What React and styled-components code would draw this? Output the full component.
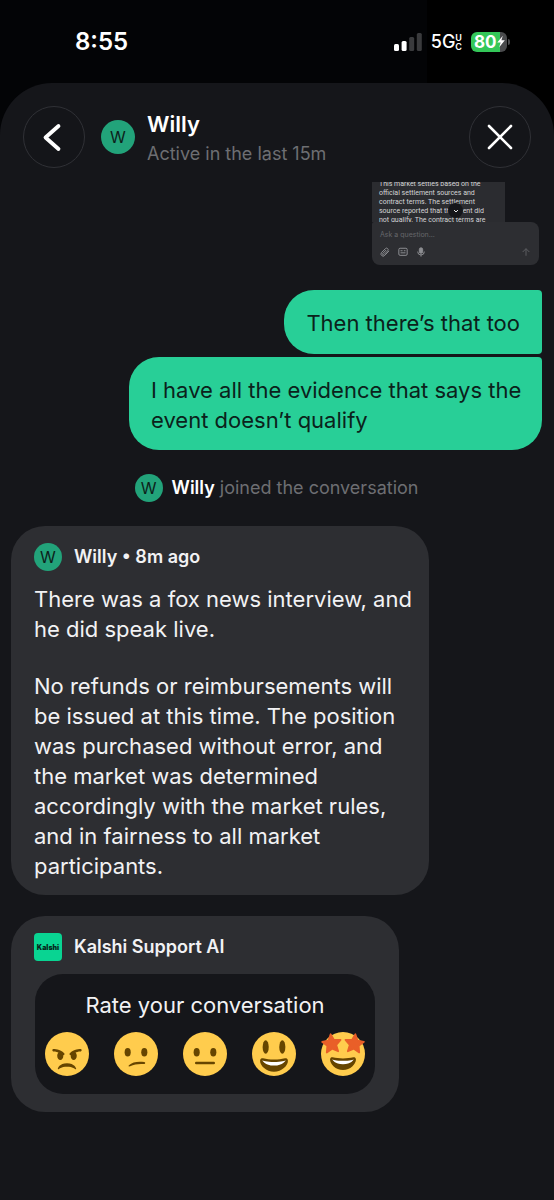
import styled, { createGlobalStyle } from "styled-components";

const App = () => {
    return(
        <>
        <GlobalStyle />
        <Screen>
            <StatusBar>
                <Time>8:55</Time>
                <StatusIcons>
                    <SignalIcon />
                    <Network>
                        5G
                        <NetworkSub>
                            <span>U</span>
                            <span>C</span>
                        </NetworkSub>
                    </Network>
                    <Battery>
                        <BatteryBody>
                            80
                            <BoltIcon />
                        </BatteryBody>
                        <BatteryTip />
                    </Battery>
                </StatusIcons>
            </StatusBar>
            <Sheet>
                <Header>
                    <RoundButton aria-label="Back">
                        <svg width="60" height="60" viewBox="0 0 60 60" fill="none" stroke="#fff" strokeWidth="3.8" strokeLinecap="round" strokeLinejoin="round">
                            <path d="M34.5 19L21.500 30.500L34.500 42" />
                        </svg>
                    </RoundButton>
                    <Avatar size={34}>W</Avatar>
                    <Agent>
                        <AgentName>Willy</AgentName>
                        <AgentStatus>Active in the last 15m</AgentStatus>
                    </Agent>
                    <RoundButton aria-label="Close">
                        <svg width="60" height="60" viewBox="0 0 60 60" fill="none" stroke="#fff" strokeWidth="2.6" strokeLinecap="round">
                            <path d="M19 19L41 41M41 19L19 41" />
                        </svg>
                    </RoundButton>
                </Header>
                <Chat>
                    <Attachment />
                    <Sent>
                        <SentBubble>Then there’s that too</SentBubble>
                        <SentBubble last>I have all the evidence that says the event doesn’t qualify</SentBubble>
                    </Sent>
                    <Joined>
                        <Avatar size={28}>W</Avatar>
                        <p><b>Willy</b> joined the conversation</p>
                    </Joined>
                    <Card>
                        <CardHeader>
                            <Avatar size={28}>W</Avatar>
                            <Sender>Willy • 8m ago</Sender>
                        </CardHeader>
                        <CardText>There was a fox news interview, and he did speak live.</CardText>
                        <CardText>No refunds or reimbursements will be issued at this time. The position was purchased without error, and the market was determined accordingly with the market rules, and in fairness to all market participants.</CardText>
                    </Card>
                    <Card narrow>
                        <CardHeader>
                            <Logo>Kalshi</Logo>
                            <Sender>Kalshi Support AI</Sender>
                        </CardHeader>
                        <RateBox>
                            <RateTitle>Rate your conversation</RateTitle>
                            <Faces>
                                {faces.map((face) => (
                                    <FaceButton key={face.label} aria-label={face.label}>
                                        <svg width="44" height="44" viewBox="0 0 36 36" overflow="visible">
                                            <circle cx="18" cy="18" r="18" fill="#ffcc4d" />
                                            {face.drawing}
                                        </svg>
                                    </FaceButton>
                                ))}
                            </Faces>
                        </RateBox>
                    </Card>
                </Chat>
            </Sheet>
        </Screen>
        </>
    )
}

const Attachment = () => {
    return(
        <Shot>
            <ShotMessage>
                <ShotText>
                    This market settles based on the<br />
                    official settlement sources and<br />
                    contract terms. The settlement<br />
                    source reported that the event did<br />
                    not qualify. The contract terms are
                </ShotText>
                <ShotScroll>
                    <svg width="8" height="8" viewBox="0 0 8 8" fill="none" stroke="#e8e8ea" strokeWidth="1">
                        <path d="M2 3L4 5L6 3" />
                    </svg>
                </ShotScroll>
            </ShotMessage>
            <ShotComposer>
                <p>Ask a question…</p>
                <ShotTools>
                    <svg width="10" height="10" viewBox="0 0 24 24" fill="none" stroke="#8d8e92" strokeWidth="2.4" strokeLinecap="round">
                        <path d="M21 10L11.5 20a5 5 0 0 1-8-6.5L13 4a3.6 3.6 0 0 1 5.5 5L9.5 18a1.8 1.8 0 0 1-3-2.4L14 8" />
                    </svg>
                    <svg width="10" height="10" viewBox="0 0 24 24" fill="none" stroke="#8d8e92" strokeWidth="2.4">
                        <rect x="2" y="3" width="20" height="17" rx="3" />
                        <path d="M6 9h5M6 14h12M14 9h4" />
                    </svg>
                    <svg width="10" height="10" viewBox="0 0 24 24" fill="none" stroke="#8d8e92" strokeWidth="2.4">
                        <rect x="8" y="2" width="8" height="13" rx="4" fill="#8d8e92" />
                        <path d="M4 11a8 8 0 0 0 16 0M12 19v4" />
                    </svg>
                    <svg width="10" height="10" viewBox="0 0 24 24" fill="none" stroke="#5c5d61" strokeWidth="2.4">
                        <path d="M12 21V4M4 12L12 4L20 12" />
                    </svg>
                </ShotTools>
            </ShotComposer>
        </Shot>
    )
}

const SignalIcon = () => (
    <svg width="28" height="18" viewBox="0 0 28 18">
        <rect x="0" y="11" width="5" height="7" rx="1.5" fill="#fff" />
        <rect x="7.6" y="8" width="5" height="10" rx="1.5" fill="#fff" />
        <rect x="15.2" y="4" width="5" height="14" rx="1.5" fill="#3a3b3d" />
        <rect x="22.8" y="0" width="5" height="18" rx="1.5" fill="#3a3b3d" />
    </svg>
)

const BoltIcon = () => (
    <svg width="8" height="13" viewBox="0 0 9 14">
        <path d="M6.5 0.5L0.3 8H4L2.5 13.5L8.8 5.6H5Z" fill="#fff" />
    </svg>
)

const Star = ({x, turn}) => (
    <path
        transform={`translate(${x} 9.8) rotate(${turn})`}
        d="M0-8L2.3-3.1L7.6-2.5L3.7 1.2L4.7 6.5L0 3.9L-4.7 6.5L-3.7 1.2L-7.6-2.5L-2.3-3.1Z"
        fill="#e95f28"
        stroke="#e95f28"
        strokeWidth="1.4"
        strokeLinejoin="round"
    />
)

const Eyes = () => (
    <>
    <ellipse cx="11.2" cy="16.5" rx="2.5" ry="3.5" fill="#664500" />
    <ellipse cx="24.8" cy="16.5" rx="2.5" ry="3.5" fill="#664500" />
    </>
)

const faces = [
    {
        label: "Terrible",
        drawing: (
            <path fill="#664500" d="M25.485 29.879C25.44 29.7 24.317 25.5 18 25.5c-6.318 0-7.44 4.2-7.485 4.379-.055.217.043.442.237.554.195.111.439.078.6-.077.019-.019 1.954-1.856 6.648-1.856s6.63 1.837 6.648 1.855c.096.095.224.145.352.145.084 0 .169-.021.246-.064.196-.112.294-.339.239-.557zm-9.778-12.586C12.452 14.038 7.221 14 7 14c-.552 0-.999.447-.999.998-.001.552.446 1 .998 1.002.029 0 1.925.022 3.983.737-.593.64-.982 1.634-.982 2.763 0 1.934 1.119 3.5 2.5 3.5s2.5-1.566 2.5-3.5c0-.174-.019-.34-.037-.507.013 0 .025.007.037.007.256 0 .512-.098.707-.293.391-.391.391-1.023 0-1.414zM29 14c-.221 0-5.451.038-8.707 3.293-.391.391-.391 1.023 0 1.414.195.195.451.293.707.293.013 0 .024-.007.036-.007-.016.167-.036.333-.036.507 0 1.934 1.119 3.5 2.5 3.5s2.5-1.566 2.5-3.5c0-1.129-.389-2.123-.982-2.763 2.058-.715 3.954-.737 3.984-.737.551-.002.998-.45.997-1.002-.001-.551-.447-.998-.999-.998z" />
        ),
    },
    {
        label: "Bad",
        drawing: (
            <>
            <Eyes />
            <path fill="#664500" d="M12.2 27.2C15 24.6 19.6 23.8 24.8 24.6C25.9 24.8 25.8 26.2 24.7 26.2C20 25.9 16.8 26.3 13.2 28.1C12.3 28.5 11.5 27.9 12.2 27.2Z" />
            </>
        ),
    },
    {
        label: "OK",
        drawing: (
            <>
            <Eyes />
            <path fill="#664500" d="M25.2 26.4H10.8a1 1 0 0 1 0-2h14.4a1 1 0 0 1 0 2z" />
            </>
        ),
    },
    {
        label: "Great",
        drawing: (
            <>
            <ellipse cx="11.2" cy="12.3" rx="2.5" ry="5.5" fill="#664500" />
            <ellipse cx="24.8" cy="12.3" rx="2.5" ry="5.5" fill="#664500" />
            <path fill="#664500" d="M18 22.5c-3.623 0-6.027-.422-9-1-.679-.131-2.4 0-2.4 2 0 4 4.995 9 11.4 9 6.404 0 11.4-5 11.4-9 0-2-1.721-2.132-2.4-2-2.973.578-5.377 1-9 1z" />
            <path fill="#fff" d="M8.5 23.300s3.500 1.200 9.500 1.200 9.500-1.200 9.500-1.200-2 4.200-9.500 4.200-9.500-4.200-9.500-4.200z" />
            </>
        ),
    },
    {
        label: "Amazing",
        drawing: (
            <>
            <Star x={8.7} turn={-6} />
            <Star x={27.3} turn={6} />
            <path fill="#664500" d="M18 21.6c-3.4 0-5.7-.4-8.5-.95-.64-.12-2.1 0-2.1 1.9 0 3.8 4.5 8.6 10.6 8.6s10.6-4.8 10.6-8.6c0-1.9-1.46-2.02-2.1-1.9-2.8.55-5.1.95-8.5.95z" />
            <path fill="#fff" d="M9.3 22.4s3 1.1 8.7 1.1 8.7-1.1 8.7-1.1-2 3.9-8.7 3.9-8.7-3.9-8.7-3.9z" />
            </>
        ),
    },
]

const GlobalStyle = createGlobalStyle`
* {
    box-sizing: border-box;
}
body {
    margin: 0;
    background-color: #030406;
    font-family: Inter, "Liberation Sans", sans-serif;
}
p, h1, h2 {
    margin: 0;
}
button {
    padding: 0;
    border: none;
    background: none;
    cursor: pointer;
}
svg {
    display: block;
    flex-shrink: 0;
}
`

const Screen = styled.div`
min-height: 100vh;
display: flex;
flex-direction: column;
background: linear-gradient(to right, #030406 77%, #000 77%);
color: #fff;
`
const StatusBar = styled.div`
height: 83px;
padding: 0 44px 0 75px;
display: flex;
justify-content: space-between;
align-items: center;
`
const Time = styled.div`
font-size: 24px;
font-weight: 600;
`
const StatusIcons = styled.div`
display: flex;
align-items: center;
gap: 9px;
`
const Network = styled.div`
display: flex;
align-items: center;
font-size: 18px;
font-weight: 500;
`
const NetworkSub = styled.div`
display: flex;
flex-direction: column;
font-size: 9px;
line-height: 9px;
font-weight: 600;
span {
    height: 9px;
    overflow: hidden;
}
`
const Battery = styled.div`
display: flex;
align-items: center;
gap: 1px;
`
const BatteryBody = styled.div`
width: 36px;
height: 20px;
padding-left: 3px;
display: flex;
align-items: center;
border-radius: 6px;
background: linear-gradient(to right, #34c759 80%, #4a4b4d 80%);
font-size: 17px;
font-weight: 700;
`
const BatteryTip = styled.div`
width: 2px;
height: 6px;
border-radius: 0 2px 2px 0;
background-color: #4a4b4d;
`
const Sheet = styled.main`
flex: 1;
border-radius: 52px 52px 0 0;
background-color: #15161a;
`
const Header = styled.header`
height: 99px;
padding: 8px 23px 0;
display: flex;
align-items: center;
`
const RoundButton = styled.button`
width: 62px;
height: 62px;
flex-shrink: 0;
border: 1px solid #303136;
border-radius: 50%;
background-color: #141519;
`
const Avatar = styled.div.withConfig({ shouldForwardProp: (prop) => prop !== "size" })`
width: ${props => props.size}px;
height: ${props => props.size}px;
flex-shrink: 0;
display: flex;
justify-content: center;
align-items: center;
border-radius: 50%;
background-color: #22a37a;
color: #0d1f1a;
font-size: 16px;
${Header} & {
    margin: 0 12px 0 16px;
}
`
const Agent = styled.div`
flex: 1;
padding-top: 4px;
`
const AgentName = styled.h1`
font-size: 22px;
line-height: 30px;
font-weight: 600;
`
const AgentStatus = styled.p`
color: #6d6e72;
font-size: 18px;
line-height: 30px;
`
const Chat = styled.div`
padding: 0 12px 88px 11px;
display: flex;
flex-direction: column;
`
const Shot = styled.div`
width: 167px;
margin: 0 3px 25px 0;
align-self: flex-end;
`
const ShotMessage = styled.div`
position: relative;
width: 133px;
height: 40px;
padding: 0 7px;
overflow: hidden;
background-color: #2b2c30;
`
const ShotText = styled.p`
margin-top: -2px;
color: #d4d4d6;
font-family: Roboto, Inter, sans-serif;
font-size: 7px;
line-height: 9px;
white-space: nowrap;
`
const ShotScroll = styled.div`
position: absolute;
top: 21px;
left: 76px;
width: 15px;
height: 15px;
display: flex;
justify-content: center;
align-items: center;
border-radius: 50%;
background-color: #15161a;
`
const ShotComposer = styled.div`
height: 43px;
padding: 8px;
display: flex;
flex-direction: column;
justify-content: space-between;
border-radius: 2px 8px 8px 8px;
background-color: #2d2e32;
color: #66676b;
font-size: 7px;
line-height: 9px;
`
const ShotTools = styled.div`
display: flex;
gap: 8px;
svg:last-child {
    margin-left: auto;
}
`
const Sent = styled.div`
display: flex;
flex-direction: column;
align-items: flex-end;
gap: 3px;
`
const SentBubble = styled.p.withConfig({ shouldForwardProp: (prop) => prop !== "last" })`
max-width: 413px;
padding: ${props => props.last ? "18px 16px 15px 22px" : "18px 22px 16px"};
border-radius: ${props => props.last ? "30px 4px 30px 30px" : "30px 4px 4px 30px"};
background-color: #28cf97;
color: #0b221b;
font-size: 22px;
line-height: 30px;
`
const Joined = styled.div`
margin: 24px 0;
display: flex;
justify-content: center;
align-items: center;
gap: 9px;
color: #6d6e72;
font-size: 18px;
line-height: 28px;
b {
    color: #fff;
    font-weight: 600;
}
`
const Card = styled.section.withConfig({ shouldForwardProp: (prop) => prop !== "narrow" })`
width: 100%;
max-width: ${props => props.narrow ? "388px" : "418px"};
padding: ${props => props.narrow ? "17px 23px 18px" : "17px 16px 14px 23px"};
border-radius: 34px;
background-color: #2d2e32;
& + & {
    margin-top: 21px;
}
`
const CardHeader = styled.div`
margin-bottom: 13px;
display: flex;
align-items: center;
gap: 12px;
`
const Sender = styled.h2`
font-size: 18px;
line-height: 28px;
font-weight: 600;
color: #f2f2f4;
`
const CardText = styled.p`
color: #f2f2f4;
font-size: 22px;
line-height: 30px;
& + & {
    margin-top: 27px;
}
`
const Logo = styled.div`
width: 28px;
height: 28px;
display: flex;
justify-content: center;
align-items: center;
border-radius: 4px;
background-color: #09d492;
color: #06281d;
font-size: 7px;
font-weight: 900;
`
const RateBox = styled.div`
margin: 0 1px;
padding: 16px 10px 18px;
border-radius: 28px;
background-color: #15161a;
`
const RateTitle = styled.p`
margin-bottom: 12px;
color: #f2f2f4;
font-size: 22px;
line-height: 30px;
text-align: center;
`
const Faces = styled.div`
display: flex;
justify-content: space-between;
`
const FaceButton = styled.button`
width: 44px;
height: 44px;
border-radius: 50%;
`

export default App;
